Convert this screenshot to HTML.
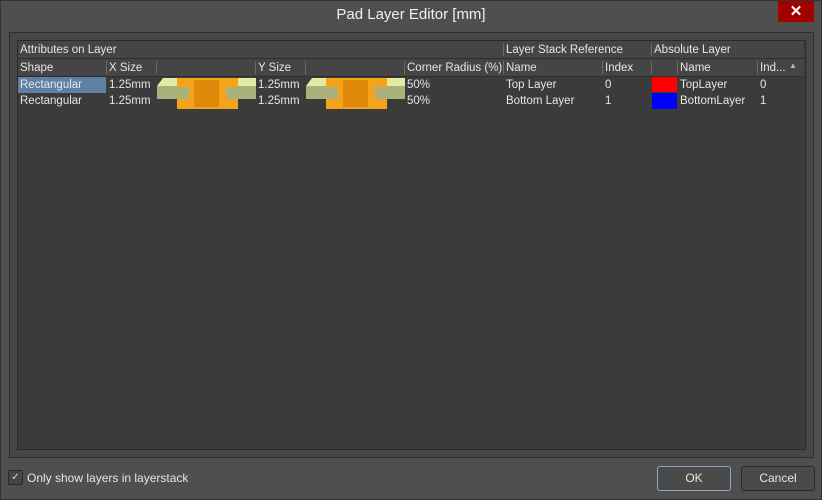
<!DOCTYPE html><html><head><style>
body{margin:0;width:822px;height:500px;overflow:hidden;background:#4f4f4f;font-family:"Liberation Sans",sans-serif;font-size:11.5px;color:#e6e6e6}
.win{position:absolute;left:0;top:0;width:820px;height:498px;border:1px solid #333;background:#4f4f4f}
.title{position:absolute;left:0;top:6px;width:822px;text-align:center;font-size:15px;color:#f0f0f0}
.close{position:absolute;left:778px;top:1px;width:36px;height:21px;background:#a30000;color:#fff;font-size:15px;font-weight:bold;text-align:center;line-height:21px}
.frame{position:absolute;left:9px;top:32px;width:803px;height:424px;border:1px solid #2e2e2e;background:#474747}
.grid{position:absolute;left:17px;top:40px;width:787px;height:408px;border:1px solid #2a2a2a;background:#3b3b3b}
.t{position:absolute;white-space:nowrap}
.hd{position:absolute;background:#454545;border-bottom:1px solid #2e2e2e}
.sep{position:absolute;width:1px;background:#6a6a6a}
.btn{position:absolute;top:466px;width:72px;height:23px;border:1px solid #2a2a2a;border-radius:3px;background:#4a4a4a;text-align:center;line-height:23px;font-size:12px}
</style></head><body><div class="win"></div>
<div class="title">Pad Layer Editor [mm]</div>
<div class="close">✕</div>
<div class="frame"></div>
<div class="grid"></div>
<div class="hd" style="left:18px;top:41px;width:786px;height:17px"></div>
<div class="hd" style="left:18px;top:59px;width:786px;height:17px"></div>
<div class="t" style="left:20px;top:44px">Attributes on Layer</div>
<div class="sep" style="left:503px;top:43px;height:13px"></div><div class="t" style="left:506px;top:44px">Layer Stack Reference</div>
<div class="sep" style="left:651px;top:43px;height:13px"></div><div class="t" style="left:654px;top:44px">Absolute Layer</div>
<div class="t" style="left:20px;top:62px">Shape</div>
<div class="sep" style="left:106px;top:61px;height:13px"></div><div class="t" style="left:109px;top:62px">X Size</div>
<div class="sep" style="left:156px;top:61px;height:13px"></div>
<div class="sep" style="left:255px;top:61px;height:13px"></div><div class="t" style="left:258px;top:62px">Y Size</div>
<div class="sep" style="left:305px;top:61px;height:13px"></div>
<div class="sep" style="left:404px;top:61px;height:13px"></div><div class="t" style="left:407px;top:62px">Corner Radius (%)</div>
<div class="sep" style="left:503px;top:61px;height:13px"></div><div class="t" style="left:506px;top:62px">Name</div>
<div class="sep" style="left:602px;top:61px;height:13px"></div><div class="t" style="left:605px;top:62px">Index</div>
<div class="sep" style="left:651px;top:61px;height:13px"></div>
<div class="sep" style="left:677px;top:61px;height:13px"></div><div class="t" style="left:680px;top:62px">Name</div>
<div class="sep" style="left:757px;top:61px;height:13px"></div><div class="t" style="left:760px;top:62px">Ind...</div>
<div class="t" style="left:789px;top:61px;color:#bbb;font-size:8px">▲</div>
<div style="position:absolute;left:18px;top:77px;width:88px;height:16px;background:#5f80a3"></div>
<div class="t" style="left:20px;top:79px">Rectangular</div><div class="t" style="left:20px;top:95px">Rectangular</div>
<div class="t" style="left:109px;top:79px">1.25mm</div><div class="t" style="left:109px;top:95px">1.25mm</div>
<div class="t" style="left:258px;top:79px">1.25mm</div><div class="t" style="left:258px;top:95px">1.25mm</div>
<div class="t" style="left:407px;top:79px">50%</div><div class="t" style="left:407px;top:95px">50%</div>
<div class="t" style="left:506px;top:79px">Top Layer</div><div class="t" style="left:506px;top:95px">Bottom Layer</div>
<div class="t" style="left:605px;top:79px">0</div><div class="t" style="left:605px;top:95px">1</div>
<div style="position:absolute;left:652px;top:77px;width:25px;height:15px;background:#f00"></div>
<div style="position:absolute;left:652px;top:93px;width:25px;height:16px;background:#00f"></div>
<div class="t" style="left:680px;top:79px">TopLayer</div><div class="t" style="left:680px;top:95px">BottomLayer</div>
<div class="t" style="left:760px;top:79px">0</div><div class="t" style="left:760px;top:95px">1</div>
<svg style="position:absolute;left:157px;top:77px" width="99" height="32">
<polygon points="0,9 6,1 99,1 99,9" fill="#e2eaa4"/><rect x="0" y="9" width="99" height="13" fill="#a9b27a"/>
<rect x="20" y="1" width="61" height="31" fill="#f5a31a"/><rect x="20" y="10" width="12" height="12" fill="#a9b27a"/><rect x="69" y="10" width="12" height="12" fill="#a9b27a"/>
<rect x="37" y="3" width="25" height="27" fill="#e08a0c"/></svg>
<svg style="position:absolute;left:306px;top:77px" width="99" height="32">
<polygon points="0,9 6,1 99,1 99,9" fill="#e2eaa4"/><rect x="0" y="9" width="99" height="13" fill="#a9b27a"/>
<rect x="20" y="1" width="61" height="31" fill="#f5a31a"/><rect x="20" y="10" width="12" height="12" fill="#a9b27a"/><rect x="69" y="10" width="12" height="12" fill="#a9b27a"/>
<rect x="37" y="3" width="25" height="27" fill="#e08a0c"/></svg>
<div style="position:absolute;left:8px;top:470px;width:13px;height:13px;border:1px solid #2a2a2a;border-radius:2px;background:#454545;color:#ddd;font-size:10px;line-height:13px;text-align:center">✓</div>
<div class="t" style="left:27px;top:471px;font-size:12px">Only show layers in layerstack</div>
<div class="btn" style="left:657px;border-color:#8aa6c4">OK</div>
<div class="btn" style="left:741px">Cancel</div>
</body></html>
